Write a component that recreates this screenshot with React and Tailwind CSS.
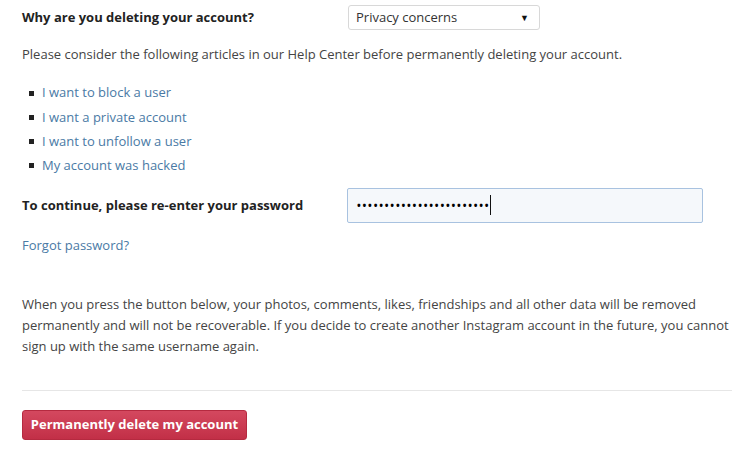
import React from "react";

const articles = [
  "I want to block a user",
  "I want a private account",
  "I want to unfollow a user",
  "My account was hacked",
];

export default function App() {
  return (
    <div
      className="bg-white w-[750px] h-[459px] overflow-hidden pl-[22px] pr-[18px] text-[13px] text-[#333]"
      style={{ fontFamily: '"Open Sans", "Noto Sans", sans-serif' }}
    >
      <div className="flex items-center pt-[5px]">
        <label className="w-[326px] font-bold text-[#222]">
          Why are you deleting your account?
        </label>
        <div className="w-[192px] h-[25px] border border-[#d8d8d8] rounded-[3px] flex items-center justify-between pl-[7px] pr-[10px] text-[#333]">
          <span>Privacy concerns</span>
          <span className="text-[9px] text-[#111]">▼</span>
        </div>
      </div>

      <p className="mt-[14px] leading-[20px] text-[#444]">
        Please consider the following articles in our Help Center before
        permanently deleting your account.
      </p>

      <ul className="mt-[19px] ml-[7px] flex flex-col gap-[4.3px]">
        {articles.map((a, i) => (
          <li key={i} className="flex items-center h-[20px]">
            <span className="w-[5px] h-[5px] bg-[#222] mr-[8px]" />
            <a href="#" className="text-[#4a7aa5]">
              {a}
            </a>
          </li>
        ))}
      </ul>

      <div className="flex items-center mt-[12px]">
        <label className="w-[325px] font-bold text-[#222]">
          To continue, please re-enter your password
        </label>
        <div className="w-[356px] h-[35px] border border-[#a8c2e0] rounded-[2px] bg-[#f5f8fb] flex items-center pl-[9px]">
          <span className="text-[#000] font-bold tracking-[1.8px] text-[10px] leading-none">
            ••••••••••••••••••••••••
          </span>
          <span className="w-px h-[20px] bg-[#111]" />
        </div>
      </div>

      <a href="#" className="block mt-[12px] leading-[20px] text-[#4a7aa5]">
        Forgot password?
      </a>

      <p className="mt-[39px] leading-[21px] text-[#444]">
        When you press the button below, your photos, comments, likes,
        friendships and all other data will be removed permanently and will not
        be recoverable. If you decide to create another Instagram account in the
        future, you cannot sign up with the same username again.
      </p>

      <div className="mt-[33px] border-t border-[#e6e6e6]" />

      <button className="mt-[19px] w-[225px] h-[30px] rounded-[3px] bg-gradient-to-b from-[#d4485f] to-[#c22f47] border border-[#b52a40] text-white font-bold text-[13px] whitespace-nowrap">
        Permanently delete my account
      </button>
    </div>
  );
}
